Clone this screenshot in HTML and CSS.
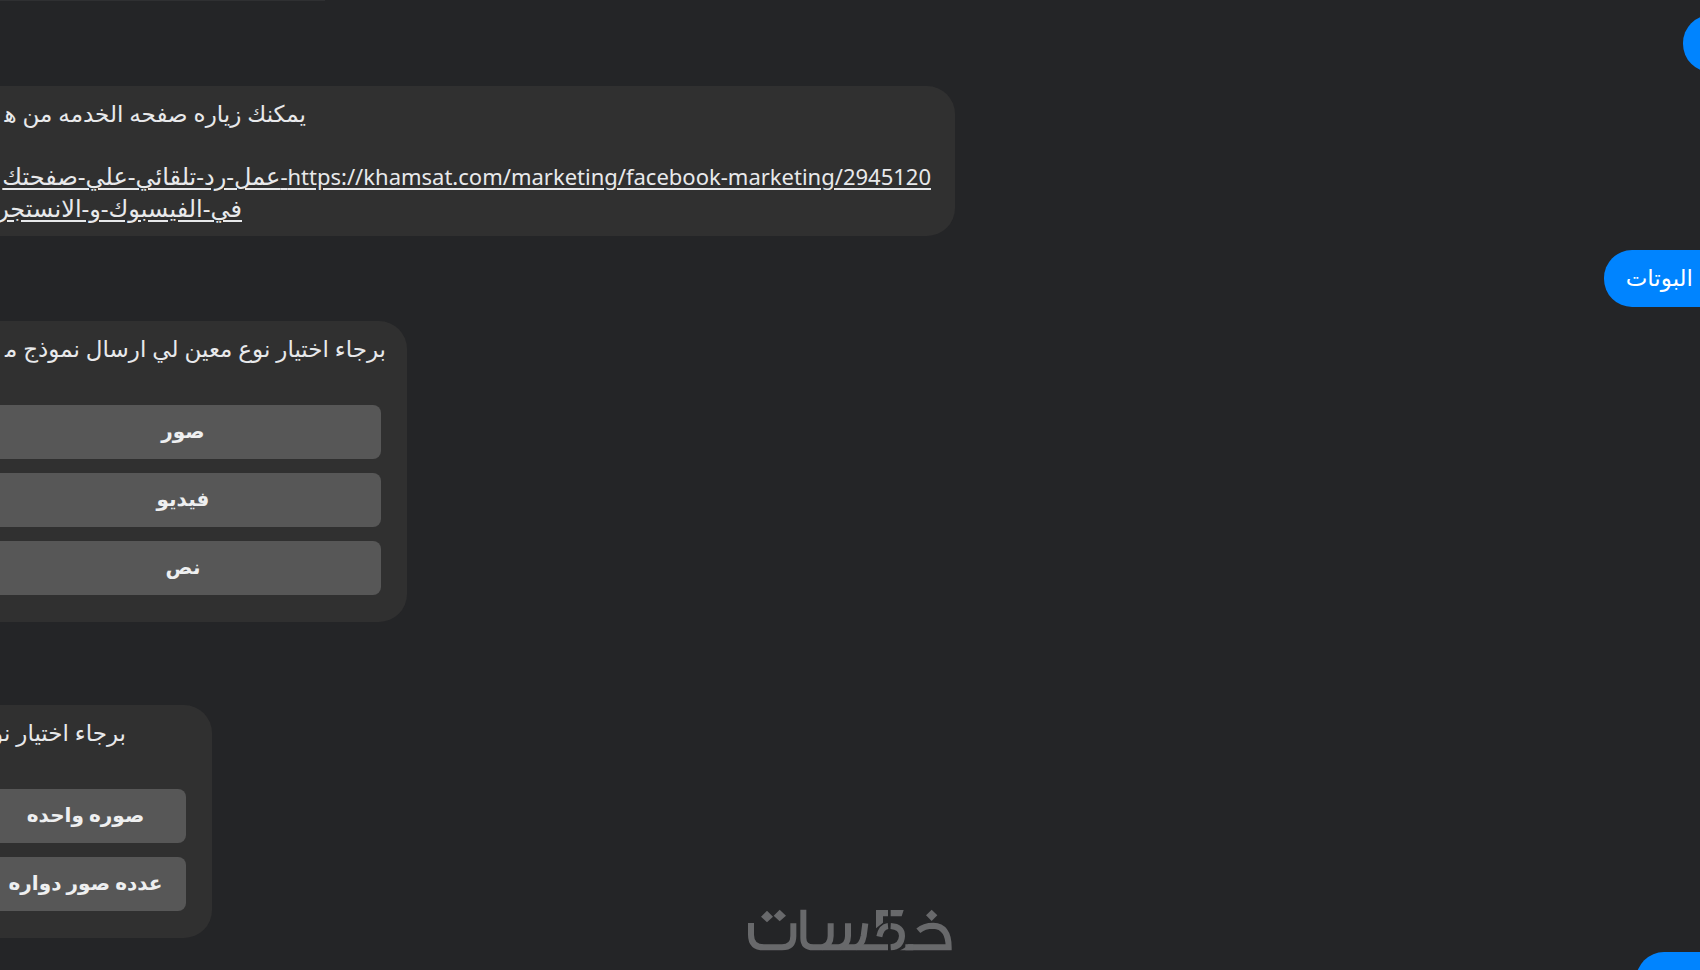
FILE: index.html
```html
<!DOCTYPE html>
<html lang="ar">
<head>
<meta charset="utf-8">
<title>محادثة</title>
<link rel="stylesheet" href="styles.css">
</head>
<body>
<main class="chat">
  <div class="previous"></div>
  <div class="bubble sent sent-tiny"></div>

  <article class="bubble received service">
    <p class="line line-intro" dir="rtl">يمكنك زياره صفحه الخدمه من ه&zwj;</p>
    <p class="line line-link" dir="rtl"><a href="#service"><span class="latin">https://khamsat.com/marketing/facebook-marketing/2945120-</span>عمل-رد-تلقائي-علي-صفحتك</a></p>
    <p class="line line-link line-rest" dir="rtl"><a href="#service">في-الفيسبوك-و-الانستجر</a></p>
  </article>

  <div class="bubble sent" dir="rtl">البوتات</div>

  <article class="bubble received kinds">
    <p class="line line-kinds" dir="rtl">برجاء اختيار نوع معين لي ارسال نموذج م&zwj;</p>
    <div class="options">
      <button type="button">صور</button>
      <button type="button">فيديو</button>
      <button type="button">نص</button>
    </div>
  </article>

  <article class="bubble received images">
    <p class="line line-images" dir="rtl">برجاء اختيار نو</p>
    <div class="options">
      <button type="button">صوره واحده</button>
      <button type="button">عدده صور دواره</button>
    </div>
  </article>

  <div class="bubble sent sent-last"></div>
</main>

<svg class="watermark" viewBox="54 42 612 124" role="img" aria-label="خمسات">
  <g fill="none" stroke="#68696b" stroke-width="18">
    <path d="M63 83V118Q63 156 102 156H156Q190 156 190 122V84"/>
    <path d="M220 43V128Q220 156 250 156H474"/>
    <path d="M302 84V122Q302 150 276 156"/>
    <path d="M354 84V122Q354 150 328 156"/>
    <path d="M406 84L401 122Q396 150 376 156"/>
    <path d="M448 124Q454 94 474 92"/>
    <path d="M482 92Q516 94 516 122Q514 154 482 156"/>
    <path d="M565 106Q582 91 610 91Q656 93 656 156H526"/>
  </g>
  <g fill="#68696b">
    <path d="M438 44H474V63H459V82L438 99ZM482 44H521L515 63H482Z"/>
    <path d="M510 165Q528 158 534 147H550V165Z"/>
    <path d="M111 46L129 64L111 81L93 64ZM149 43L168 61L149 78L131 61ZM605 43L622 60L605 77L588 60Z"/>
  </g>
</svg>
</body>
</html>
```
FILE: styles.css
```css
* {
  box-sizing: border-box;
}

body {
  margin: 0;
  background: #242527;
  color: #e8e9eb;
  font-family: "Noto Sans", "DejaVu Sans", sans-serif;
  font-size: 23px;
  line-height: 31px;
}

.chat {
  display: flex;
  flex-direction: column;
  gap: 14px;
  height: 100vh;
  overflow: hidden;
}

.chat > * {
  flex-shrink: 0;
}

.previous {
  width: 325px;
  height: 1px;
  background: #2f3032;
}

.bubble {
  border-radius: 28px;
}

.received {
  align-self: flex-start;
  margin-left: -41px;
  background: #303030;
}

.sent {
  align-self: flex-end;
  min-height: 57px;
  margin-right: -41px;
  padding: 12px 48px 14px 22px;
  background: #0084ff;
  color: #fff;
}

.sent-tiny,
.sent-last {
  width: 105px;
  padding: 0;
}

.sent-tiny {
  width: 58px;
}

.line {
  margin: 0;
  white-space: nowrap;
}

.line a {
  color: inherit;
  text-underline-offset: 3px;
}

.line-link {
  font-size: 24px;
}

.latin {
  font-size: 22px;
}

.service {
  width: 996px;
  padding: 12px 24px 13px;
}

.line-intro {
  width: 323px;
  margin-bottom: 31px;
}

.line-rest {
  width: 259px;
}

.kinds {
  width: 448px;
  margin-bottom: 69px;
  padding: 12px 26px 27px;
}

.line-kinds {
  width: 401px;
}

.images {
  width: 253px;
  padding: 12px 26px 27px;
}

.line-images {
  width: 141px;
}

.options {
  display: grid;
  gap: 14px;
  margin-top: 41px;
}

.options button {
  height: 54px;
  padding: 0 0 4px;
  border: 0;
  border-radius: 8px;
  background: #575757;
  color: #eeeff0;
  font: inherit;
  font-size: 20px;
  font-weight: 700;
  white-space: nowrap;
}

.watermark {
  position: fixed;
  bottom: 19px;
  left: 50%;
  width: 204px;
  height: 42px;
  margin-left: -102px;
}
```
